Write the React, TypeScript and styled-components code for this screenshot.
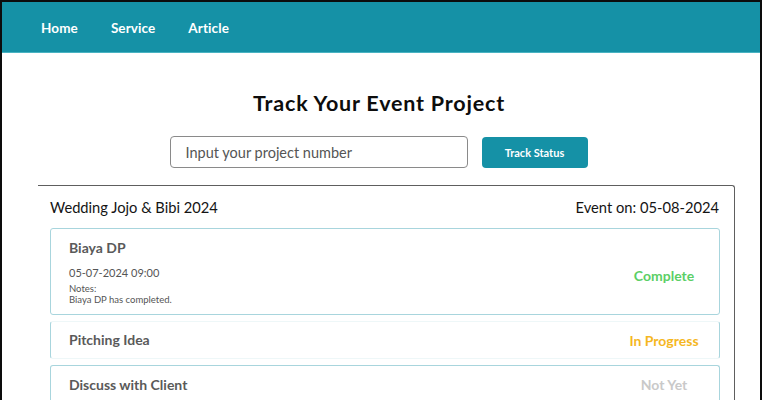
import React from "react";
import styled, { createGlobalStyle } from "styled-components";

const GlobalStyle = createGlobalStyle`
  html, body {
    margin: 0;
    padding: 0;
    background: #ffffff;
  }
  body {
    font-family: "Lato", "Noto Sans", sans-serif;
  }
  * {
    box-sizing: border-box;
  }
`;

const Frame = styled.div`
  width: 762px;
  height: 400px;
  border: 2px solid #0c0c0c;
  border-bottom: none;
  overflow: hidden;
  background: #ffffff;
`;

const Navbar = styled.nav`
  height: 51px;
  background: #1591a6;
  border-bottom: 1px solid #49b3c2;
  display: flex;
  align-items: center;
  gap: 33px;
  padding: 2px 0 0 39px;
`;

const NavLink = styled.a`
  color: #ffffff;
  font-size: 13.5px;
  font-weight: 700;
  text-decoration: none;
  letter-spacing: 0.1px;
`;

const Main = styled.main`
  padding-top: 36px;
  display: flex;
  flex-direction: column;
  align-items: center;
`;

const Title = styled.h1`
  margin: 0 0 0 -4px;
  font-size: 21.5px;
  font-weight: 700;
  letter-spacing: 0.8px;
  color: #0d0d0d;
  line-height: 28px;
`;

const SearchRow = styled.div`
  margin-top: 19px;
  display: flex;
  gap: 14px;
  padding-right: 5px;
`;

const SearchInput = styled.input`
  width: 298px;
  height: 32px;
  border: 1px solid #8a8a8a;
  border-radius: 4px;
  padding: 0 15px;
  font-family: "Lato", "Noto Sans", sans-serif;
  font-size: 14.5px;
  color: #333;
  outline: none;

  &::placeholder {
    color: #555555;
  }
`;

const TrackButton = styled.button`
  width: 106px;
  height: 31px;
  margin-top: 1px;
  background: #1591a6;
  border: none;
  border-radius: 4px;
  color: #ffffff;
  font-family: "Lato", "Noto Sans", sans-serif;
  font-size: 11px;
  font-weight: 700;
`;

const EventPanel = styled.section`
  align-self: flex-start;
  margin-left: 36px;
  margin-top: 17px;
  width: 697px;
  border-top: 1px solid #5e5e5e;
  border-right: 1px solid #5e5e5e;
  border-top-right-radius: 3px;
  padding: 11px 14px 0 12px;
`;

const EventHeader = styled.div`
  display: flex;
  justify-content: space-between;
  align-items: center;
  font-size: 14.7px;
  color: #141414;
  line-height: 20px;
  padding-right: 1px;
`;

const StepList = styled.div`
  margin-top: 11px;
  display: flex;
  flex-direction: column;
  gap: 6px;
`;

const StepCard = styled.div<{ $sides?: "all" | "sides" | "top" }>`
  display: flex;
  align-items: center;
  justify-content: space-between;
  border: 1px solid #a8d5dd;
  border-radius: 3px;
  ${(p) => p.$sides === "sides" && "border-top-color: #eef7f8; border-bottom-color: #eef7f8;"}
  ${(p) => p.$sides === "top" && "border-bottom: none;"}
  padding: 0 10px 0 18px;
  min-height: ${(p) => (p.$sides === "all" ? "87px" : "38px")};
`;

const StepInfo = styled.div`
  display: flex;
  flex-direction: column;
`;

const StepName = styled.div`
  font-size: 14px;
  font-weight: 700;
  color: #5a5a5a;
  line-height: 18px;
`;

const StepDate = styled.div`
  margin-top: 9px;
  font-size: 11px;
  color: #555555;
  line-height: 14px;
`;

const StepNotes = styled.div`
  margin-top: 3px;
  font-size: 9.5px;
  color: #555555;
  line-height: 11px;
`;

const StatusLabel = styled.div<{ $color: string; $drop?: boolean }>`
  width: 90px;
  text-align: center;
  font-size: 14px;
  font-weight: 700;
  color: ${(p) => p.$color};
  margin-top: ${(p) => (p.$drop ? "7px" : "0")};
`;

const statusColors: Record<string, string> = {
  Complete: "#5bcf66",
  "In Progress": "#f5b71f",
  "Not Yet": "#c9c9c9",
};

const steps = [
  {
    name: "Biaya DP",
    status: "Complete",
    date: "05-07-2024 09:00",
    notes: "Biaya DP has completed.",
    sides: "all" as const,
  },
  { name: "Pitching Idea", status: "In Progress", sides: "sides" as const },
  { name: "Discuss with Client", status: "Not Yet", sides: "top" as const },
];

export default function App() {
  return (
    <>
      <GlobalStyle />
      <Frame>
        <Navbar>
          <NavLink>Home</NavLink>
          <NavLink>Service</NavLink>
          <NavLink>Article</NavLink>
        </Navbar>
        <Main>
          <Title>Track Your Event Project</Title>
          <SearchRow>
            <SearchInput placeholder="Input your project number" />
            <TrackButton>Track Status</TrackButton>
          </SearchRow>
          <EventPanel>
            <EventHeader>
              <span>Wedding Jojo &amp; Bibi 2024</span>
              <span>Event on: 05-08-2024</span>
            </EventHeader>
            <StepList>
              {steps.map((s) => (
                <StepCard key={s.name} $sides={s.sides}>
                  <StepInfo>
                    <StepName>{s.name}</StepName>
                    {s.date && <StepDate>{s.date}</StepDate>}
                    {s.notes && (
                      <StepNotes>
                        Notes:
                        <br />
                        {s.notes}
                      </StepNotes>
                    )}
                  </StepInfo>
                  <StatusLabel
                    $color={statusColors[s.status]}
                    $drop={Boolean(s.date)}
                  >
                    {s.status}
                  </StatusLabel>
                </StepCard>
              ))}
            </StepList>
          </EventPanel>
        </Main>
      </Frame>
    </>
  );
}
